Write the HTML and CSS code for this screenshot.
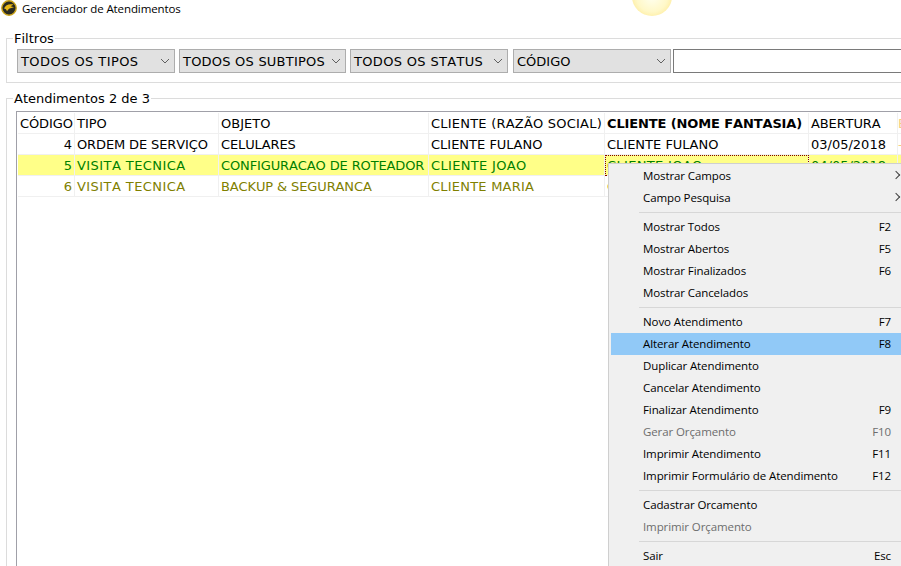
FILE: index.html
```html
<!DOCTYPE html>
<html lang="pt-BR">
<head>
<meta charset="utf-8">
<title>Gerenciador de Atendimentos</title>
<link rel="stylesheet" href="styles.css">
</head>
<body>
<div class="window">
  <header class="titlebar">
    <svg class="logo" viewBox="0 0 16 16" width="16" height="16" aria-hidden="true">
      <circle cx="8" cy="8" r="7.2" fill="#2b2b22" stroke="#c9a21a" stroke-width="1.4"/>
      <path d="M3 8.5C4.5 5 8 3.6 12.5 4.6L9.6 6.2 13 7.2 9.5 8.2C8 8.4 7 9.6 6 11.2 5.6 9.6 4.5 8.8 3 8.5Z" fill="#e8b818"/>
    </svg>
    <span class="title">Gerenciador de Atendimentos</span>
  </header>
  <div class="sun"></div>

  <fieldset class="group filters">
    <legend>Filtros</legend>
    <div class="filter-row">
      <div class="select w1"><span class="wide-l">TODOS OS TIPOS</span><svg viewBox="0 0 10 6" width="10" height="6"><path d="M1 1l4 4 4-4" fill="none" stroke="#606060" stroke-width="1"/></svg></div>
      <div class="select w2"><span class="wide-s">TODOS OS SUBTIPOS</span><svg viewBox="0 0 10 6" width="10" height="6"><path d="M1 1l4 4 4-4" fill="none" stroke="#606060" stroke-width="1"/></svg></div>
      <div class="select w3"><span class="wide-m">TODOS OS STATUS</span><svg viewBox="0 0 10 6" width="10" height="6"><path d="M1 1l4 4 4-4" fill="none" stroke="#606060" stroke-width="1"/></svg></div>
      <div class="select w4"><span>CÓDIGO</span><svg viewBox="0 0 10 6" width="10" height="6"><path d="M1 1l4 4 4-4" fill="none" stroke="#606060" stroke-width="1"/></svg></div>
      <div class="search"></div>
    </div>
  </fieldset>

  <fieldset class="group records">
    <legend>Atendimentos 2 de 3</legend>
    <div class="grid-box">
      <table class="grid">
        <colgroup><col class="c1"><col class="c2"><col class="c3"><col class="c4"><col class="c5"><col class="c6"><col class="c7"></colgroup>
        <thead>
          <tr><th class="tight">CÓDIGO</th><th>TIPO</th><th>OBJETO</th><th class="wide-s">CLIENTE (RAZÃO SOCIAL)</th><th class="sorted tight">CLIENTE (NOME FANTASIA)</th><th class="tight">ABERTURA</th><th class="extra">ENCERRAMENTO</th></tr>
        </thead>
        <tbody>
          <tr><td class="num">4</td><td class="tight">ORDEM DE SERVIÇO</td><td class="tight">CELULARES</td><td>CLIENTE FULANO</td><td>CLIENTE FULANO</td><td>03/05/2018</td><td class="extra">—</td></tr>
          <tr class="current"><td class="num">5</td><td class="wide-l">VISITA TECNICA</td><td class="tight">CONFIGURACAO DE ROTEADOR</td><td class="wide-m">CLIENTE JOAO</td><td class="focus wide-m">CLIENTE JOAO</td><td>04/05/2018</td><td class="extra">—</td></tr>
          <tr class="late"><td class="num">6</td><td class="wide-l">VISITA TECNICA</td><td class="tight">BACKUP &amp; SEGURANCA</td><td class="wide-s">CLIENTE MARIA</td><td class="wide-s">CLIENTE MARIA</td><td>04/05/2018</td><td class="extra">—</td></tr>
        </tbody>
      </table>
    </div>
  </fieldset>

  <nav class="menu">
    <div class="item"><span>Mostrar Campos</span><i class="arrow"></i></div>
    <div class="item"><span>Campo Pesquisa</span><i class="arrow"></i></div>
    <div class="sep"></div>
    <div class="item"><span>Mostrar Todos</span><kbd>F2</kbd></div>
    <div class="item"><span>Mostrar Abertos</span><kbd>F5</kbd></div>
    <div class="item"><span>Mostrar Finalizados</span><kbd>F6</kbd></div>
    <div class="item"><span>Mostrar Cancelados</span></div>
    <div class="sep"></div>
    <div class="item"><span>Novo Atendimento</span><kbd>F7</kbd></div>
    <div class="item active"><span>Alterar Atendimento</span><kbd>F8</kbd></div>
    <div class="item"><span>Duplicar Atendimento</span></div>
    <div class="item"><span>Cancelar Atendimento</span></div>
    <div class="item"><span>Finalizar Atendimento</span><kbd>F9</kbd></div>
    <div class="item disabled"><span>Gerar Orçamento</span><kbd>F10</kbd></div>
    <div class="item"><span>Imprimir Atendimento</span><kbd>F11</kbd></div>
    <div class="item"><span>Imprimir Formulário de Atendimento</span><kbd>F12</kbd></div>
    <div class="sep"></div>
    <div class="item"><span>Cadastrar Orcamento</span></div>
    <div class="item disabled"><span>Imprimir Orçamento</span></div>
    <div class="sep"></div>
    <div class="item"><span>Sair</span><kbd>Esc</kbd></div>
  </nav>
</div>
</body>
</html>
```

FILE: styles.css
```css
html, body {
  margin: 0;
  padding: 0;
  background: #fff;
}
.window {
  position: relative;
  width: 901px;
  height: 566px;
  overflow: hidden;
  font-family: "DejaVu Sans", Verdana, sans-serif;
  font-size: 13px;
  font-kerning: none;
  color: #000;
}
.wide-l { letter-spacing: 0.43px; }
.wide-m { letter-spacing: 0.33px; }
.wide-s { letter-spacing: 0.22px; }
.tight { letter-spacing: -0.12px; }
.titlebar {
  display: flex;
  align-items: center;
  height: 16px;
  padding-left: 1px;
  gap: 5px;
}
.logo { flex: none; }
.title {
  font-family: "Open Sans", "Noto Sans", sans-serif;
  font-size: 11.5px;
  letter-spacing: -0.1px;
  font-kerning: normal;
  color: #000;
}
.sun {
  position: absolute;
  left: 632px;
  top: -23px;
  width: 40px;
  height: 39px;
  border-radius: 50%;
  background: radial-gradient(circle at 50% 50%, #fffff0 0%, #fff8c8 55%, #fde68a 92%, #fdeea8 100%);
}
.group {
  margin: 0 0 0 6px;
  padding: 0;
  width: 1000px;
  box-sizing: border-box;
  border: 1px solid #dcdcdc;
  border-right: 0;
  min-inline-size: 0;
}
.group legend {
  margin-left: 6px;
  padding: 2px 1px 0;
  line-height: 14px;
  font-size: 13px;
}
.filters {
  margin-top: 14px;
  height: 53px;
}
.filter-row {
  display: flex;
  padding: 3px 0 0 10px;
}
.select {
  display: flex;
  align-items: center;
  justify-content: space-between;
  box-sizing: border-box;
  height: 24px;
  padding: 0 4px 0 3px;
  background: #e1e1e1;
  border: 1px solid #adadad;
  white-space: nowrap;
}
.w1 { width: 158px; margin-right: 4px; }
.w2 { width: 167px; margin-right: 4px; }
.w3 { width: 158px; margin-right: 5px; }
.w4 { width: 158px; margin-right: 2px; }
.search {
  box-sizing: border-box;
  width: 300px;
  height: 24px;
  background: #fff;
  border: 1px solid #7a7a7a;
}
.records {
  margin-top: 7px;
  height: 520px;
}
.grid-box {
  margin: 5px 0 0 9px;
  height: 520px;
  border: 1px solid #a0a0a8;
  border-right: 0;
  padding: 1px 0 0 1px;
}
.grid {
  border-collapse: separate;
  border-spacing: 0;
  table-layout: fixed;
  width: 960px;
}
.c1 { width: 57px; }
.c2 { width: 144px; }
.c3 { width: 210px; }
.c4 { width: 176px; }
.c5 { width: 204px; }
.c6 { width: 89px; }
.c7 { width: 80px; }
.grid th, .grid td {
  box-sizing: border-box;
  height: 21px;
  padding: 0 2px;
  font-weight: 400;
  text-align: left;
  white-space: nowrap;
  overflow: hidden;
  border-right: 1px solid #f0f0f0;
  border-bottom: 1px solid #f0f0f0;
}
.grid th.sorted { font-weight: 700; }
.grid .num { text-align: right; }
.grid .extra { color: #f5cf80; padding-left: 0; }
.current td { background: #ffff88; color: #008000; }
.grid .current .extra { background: #ffff88; color: #d0a000; }
.late td { color: #808000; }
.grid td.focus { outline: 1px dotted #800000; outline-offset: -1px; }
.menu {
  position: absolute;
  left: 608px;
  top: 163px;
  width: 320px;
  padding: 1px 0 0 2px;
  background: #f0f0f0;
  border: 1px solid #cfcfcf;
  border-right: 0;
  border-bottom: 0;
  box-sizing: border-box;
  height: 420px;
  font-family: "Open Sans", "Noto Sans", sans-serif;
  font-size: 11.5px;
  letter-spacing: -0.1px;
  color: #000;
}
.item {
  position: relative;
  display: flex;
  justify-content: space-between;
  align-items: center;
  box-sizing: border-box;
  width: 290px;
  height: 22px;
  padding: 0 10px 2px 32px;
}
.item.active { background: #91c9f7; }
.item.disabled { color: #6d6d6d; }
.item kbd { font: inherit; }
.sep {
  height: 1px;
  margin: 3px 0 3px 28px;
  background: #d7d7d7;
}
.arrow {
  width: 5px;
  height: 5px;
  border-top: 1px solid #404040;
  border-right: 1px solid #404040;
  transform: rotate(45deg);
  margin-right: -8px;
}
```
